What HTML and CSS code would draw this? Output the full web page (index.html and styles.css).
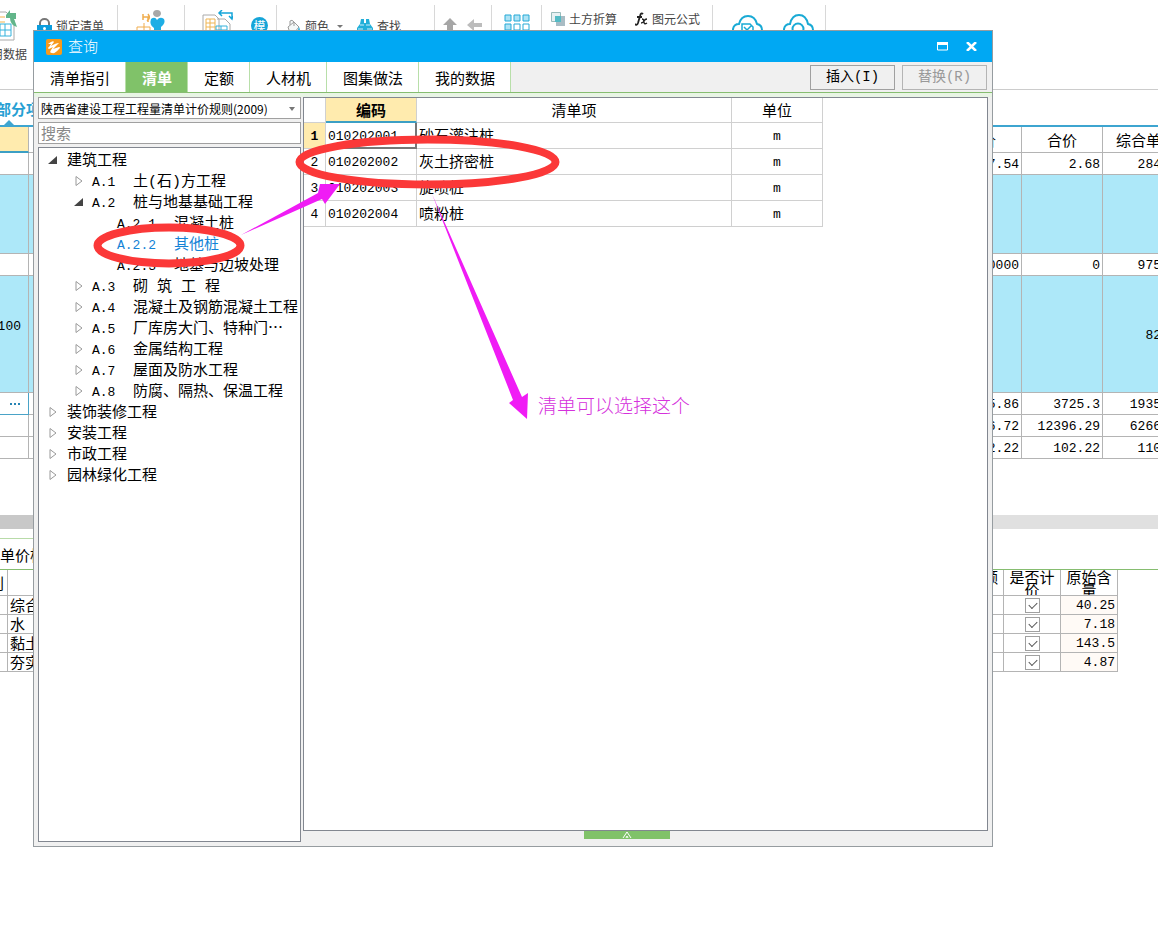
FILE: index.html
```
<!DOCTYPE html>
<html lang="zh-CN">
<head>
<meta charset="utf-8">
<title>查询</title>
<link rel="stylesheet" href="styles.css">
</head>
<body>
<main class="app">
  <header class="ribbon">
    <div class="group group-data">
      <button class="big-tool">
        <svg width="28" height="32" viewBox="0 0 28 32" fill="none"><path d="M8 3h7l8 8v20H8z" fill="#fff" stroke="#aaa"/><path d="M4 8h10M4 13h10M8 2v18" stroke="#f3b34c"/><path d="M9 15h11v12H9zM9 21h11M14 15v12" stroke="#35b2dc"/><path d="M15 6l4-5v3h6v6h-2q2 5 3 8-7-2-7-9h-4z" fill="#62b58a"/></svg>
        <span>用数据</span>
      </button>
      <button class="tool">
        <svg width="15" height="16" viewBox="0 0 15 16"><path d="M3 8V5a4.500 4 0 0 1 9 0v3" fill="none" stroke="#777" stroke-width="2"/><path d="M0 7h15v9H0z" fill="#0b9ddd"/><circle cx="7.500" cy="10.500" r="1.500" fill="#fff"/></svg>
        <span>锁定清单</span>
      </button>
    </div>
    <div class="group group-center">
      <button class="tool" aria-label="整理清单"><svg width="30" height="26" viewBox="0 0 30 26"><path d="M7 4v6M7 7h5v5M12 4q3 4-1 7" fill="none" stroke="#f0ad4e" stroke-width="1.500"/><path d="M1 17h13v6M1 17v9M8 13v13M1 21h13" fill="none" stroke="#f0ad4e"/><path d="M17 4q0-4 4-4t4 4q-1 3-4 3t-4-3" fill="#a8a8a8"/><path d="M15 9q4-3 6 1 3-4 7-1 2 4-3 8v9h-7v-8q-5-3-3-9" fill="#1eaee5"/></svg></button>
    </div>
    <div class="group group-code">
      <button class="tool" aria-label="编码"><svg width="31" height="26" viewBox="0 0 31 26" fill="none"><path d="M1 5h12l4 4v17M1 5v21" stroke="#aaa"/><path d="M4 9h9v12H4zM4 13h9M4 17h9M8 9v12" stroke="#efb552"/><path d="M15 9h8l5 5v12" stroke="#aaa"/><path d="M14 16h11v10M14 16v10M14 20h11M19 16v10" stroke="#35b2dc"/><path d="M17 3h13v6M20 0l-3 3 3 3M27 6l3 3 1-3" stroke="#15a5d9" stroke-width="1.500"/></svg></button>
      <button class="tool badge">模</button>
    </div>
    <div class="group group-edit">
      <button class="tool">
        <svg width="14" height="15" viewBox="0 0 14 15"><path d="M1 8l6-5 5 5-5 6H3zM3 6V2q2-2 4 1v4" fill="#f4f8f8" stroke="#999"/><path d="M12 8q2 4 0 5-2-1 0-5" fill="#35b2dc"/></svg>
        <span>颜色</span>
        <svg class="caret" width="6" height="3" viewBox="0 0 6 3"><path d="M0 0h6L3 3z" fill="#777"/></svg>
      </button>
      <button class="tool">
        <svg width="16" height="16" viewBox="0 0 16 16"><path d="M4 1h3v4h2V1h3l1 5 3 4v6h-7v-4H7v4H0v-6l3-4z" fill="#22afd9"/><path d="M3 7h4M9 7h4M1 11h5M10 11h5" stroke="#c9eefa"/></svg>
        <span>查找</span>
      </button>
    </div>
    <div class="group group-move">
      <button class="tool" aria-label="上移"><svg width="14" height="14" viewBox="0 0 14 14"><path d="M7 0l7 7H10v7H4V7H0z" fill="#a6a6a6"/></svg></button>
      <button class="tool" aria-label="左移"><svg width="16" height="14" viewBox="0 0 16 14"><path d="M0 7l7-6v4h8v4H7v4z" fill="#bcbcbc"/></svg></button>
    </div>
    <div class="group group-grid">
      <button class="tool" aria-label="其他"><svg width="26" height="17" viewBox="0 0 26 17" fill="#aee3f5" stroke="#25a9d6"><path d="M1 1h6v6H1zM10 1h6v6h-6zM19 1h6v6h-6zM1 10h6v6H1z"/><path fill="#fff" d="M10 10h6v6h-6zM19 10h6v6h-6z"/></svg></button>
    </div>
    <div class="group group-calc">
      <button class="tool">
        <svg width="14" height="14" viewBox="0 0 14 14"><path d="M.5.500h9v9h-9z" fill="#e7f1f3" stroke="#9bb"/><path d="M5 4h9v10H5z" fill="#a9bcc4"/><path d="M4 4h6v6H4z" fill="#53bbc5"/></svg>
        <span>土方折算</span>
      </button>
      <button class="tool">
        <svg width="13" height="14" viewBox="0 0 13 14" fill="none" stroke="#222"><path d="M8 2q-2-2-3 2L3 11q-1 3-3 1M2 5h5" stroke-width="1.800"/><path d="M7 7q2 0 2 3t3 1M12 7q-2 0-3 2t-3 2" stroke-width="1.400"/></svg>
        <span>图元公式</span>
      </button>
    </div>
    <div class="group group-cloud">
      <button class="tool" aria-label="云检查"><svg width="32" height="25" viewBox="0 0 32 25" fill="none" stroke="#19aad5" stroke-width="2"><path d="M7 22q-6-1-5-6t6-5q2-8 9-8t9 8q5 1 5 6t-6 5"/><path d="M11 11h8l3 3v9H11zM13 14l3 3 4-4" stroke-width="1.500"/></svg></button>
      <button class="tool" aria-label="云查询"><svg width="32" height="25" viewBox="0 0 32 25" fill="none" stroke="#19aad5" stroke-width="2"><path d="M7 22q-6-1-5-6t6-5q2-9 9-9t9 9q5 1 5 6t-6 5"/><circle cx="16" cy="16" r="5.500"/></svg></button>
    </div>
  </header>

  <nav class="page-tabs"><a class="page-tab" href="#items">部分项</a></nav>

  <section class="sheet" id="items">
    <table class="cost">
      <colgroup><col class="c-mark"><col><col class="c-num"><col class="c-num"><col class="c-edge"></colgroup>
      <tr class="head"><th class="picked"></th><th></th><th>单价</th><th>合价</th><th class="num">综合单</th></tr>
      <tr class="line"><td></td><td></td><td>7.54</td><td>2.68</td><td>284</td></tr>
      <tr class="blue short"><td></td><td></td><td></td><td></td><td></td></tr>
      <tr class="line"><td></td><td></td><td>0000</td><td>0</td><td>975</td></tr>
      <tr class="blue tall"><td class="qty">100</td><td></td><td></td><td></td><td>82</td></tr>
      <tr class="line"><td class="more"><button aria-label="更多"><svg width="11" height="2" viewBox="0 0 11 2" fill="#2784b4"><path d="M0 0h2v2H0zM4 0h2v2H4zM8 0h2v2H8z"/></svg></button></td><td></td><td>5.86</td><td>3725.3</td><td>1935</td></tr>
      <tr class="line"><td></td><td></td><td>6.72</td><td>12396.29</td><td>6266</td></tr>
      <tr class="line"><td></td><td></td><td>2.22</td><td>102.22</td><td>110</td></tr>
    </table>
  </section>

  <div class="scrollbar"><div class="thumb"></div></div>

  <section class="detail">
    <div class="detail-tabs"><a href="#detail">单价构</a></div>
    <table class="parts" id="detail">
      <colgroup><col class="p-kind"><col><col class="p-name"><col class="p-check"><col class="p-value"></colgroup>
      <tr class="head"><th class="clip">别</th><th></th><th class="amount">额</th><th class="two"><div>是否计价</div></th><th class="two"><div>原始含量</div></th></tr>
      <tr><td></td><td>综合</td><td></td><td class="tick"><input type="checkbox" checked aria-label="综合 是否计价"></td><td class="value">40.25</td></tr>
      <tr><td></td><td>水</td><td></td><td class="tick"><input type="checkbox" checked aria-label="水 是否计价"></td><td class="value">7.18</td></tr>
      <tr><td></td><td>黏土</td><td></td><td class="tick"><input type="checkbox" checked aria-label="黏土 是否计价"></td><td class="value">143.5</td></tr>
      <tr><td></td><td>夯实</td><td></td><td class="tick"><input type="checkbox" checked aria-label="夯实 是否计价"></td><td class="value">4.87</td></tr>
    </table>
  </section>
</main>

<section class="dialog" role="dialog" aria-labelledby="dialog-title">
  <header class="titlebar">
    <svg width="16" height="16" viewBox="0 0 16 16"><rect width="16" height="16" rx="2" fill="#f79a1c"/><path d="M2 5q5-4 6-2L5 7q5-3 8-3L7 10l6-2q2 0 0 2-4 5-7 4-3 0-1-3l2-3-4 2q-2-1 0-2l2-3z" fill="#fff"/></svg>
    <h1 id="dialog-title">查询</h1>
    <button class="window-button" aria-label="最大化"><svg width="11" height="9" viewBox="0 0 11 9"><path d="M.5 1h10v7H.5z" fill="none" stroke="#fff"/><path d="M0 0h11v3H0z" fill="#fff"/></svg></button>
    <button class="window-button" aria-label="关闭"><svg width="11" height="9" viewBox="0 0 11 9"><path d="M1 0l9 9M10 0L1 9" stroke="#fff" stroke-width="2.500"/></svg></button>
  </header>
  <div class="tabbar">
    <nav class="tabs">
      <button>清单指引</button><button class="active">清单</button><button>定额</button><button>人材机</button><button>图集做法</button><button>我的数据</button>
    </nav>
    <button class="action">插入(I)</button>
    <button class="action" disabled>替换(R)</button>
  </div>
  <div class="body">
    <aside class="side">
      <div class="picker">
        <select aria-label="清单规则"><option>陕西省建设工程工程量清单计价规则(2009)</option></select>
        <svg class="picker-arrow" width="6" height="4" viewBox="0 0 6 4"><path d="M0 0h6L3 4z" fill="#777"/></svg>
      </div>
      <input class="search" type="text" placeholder="搜索" aria-label="搜索">
      <ul class="tree">
        <li class="l0"><svg class="tw" viewBox="0 0 9 10"><path d="M9 1v8H0z" fill="#444"/></svg><span>建筑工程</span></li>
        <li class="l1"><svg class="tw" viewBox="0 0 9 10"><path d="M2 .5v9L8 5z" fill="#fff" stroke="#999"/></svg><span class="code">A.1</span><span class="spaced">土(石)方工程</span></li>
        <li class="l1"><svg class="tw" viewBox="0 0 9 10"><path d="M9 1v8H0z" fill="#444"/></svg><span class="code">A.2</span><span>桩与地基基础工程</span></li>
        <li class="l2"><span class="code">A.2.1</span><span>混凝土桩</span></li>
        <li class="l2 current"><span class="code">A.2.2</span><span>其他桩</span></li>
        <li class="l2"><span class="code">A.2.3</span><span>地基与边坡处理</span></li>
        <li class="l1"><svg class="tw" viewBox="0 0 9 10"><path d="M2 .5v9L8 5z" fill="#fff" stroke="#999"/></svg><span class="code">A.3</span><span class="spaced">砌 筑 工 程</span></li>
        <li class="l1"><svg class="tw" viewBox="0 0 9 10"><path d="M2 .5v9L8 5z" fill="#fff" stroke="#999"/></svg><span class="code">A.4</span><span>混凝土及钢筋混凝土工程</span></li>
        <li class="l1"><svg class="tw" viewBox="0 0 9 10"><path d="M2 .5v9L8 5z" fill="#fff" stroke="#999"/></svg><span class="code">A.5</span><span>厂库房大门、特种门…</span></li>
        <li class="l1"><svg class="tw" viewBox="0 0 9 10"><path d="M2 .5v9L8 5z" fill="#fff" stroke="#999"/></svg><span class="code">A.6</span><span>金属结构工程</span></li>
        <li class="l1"><svg class="tw" viewBox="0 0 9 10"><path d="M2 .5v9L8 5z" fill="#fff" stroke="#999"/></svg><span class="code">A.7</span><span>屋面及防水工程</span></li>
        <li class="l1"><svg class="tw" viewBox="0 0 9 10"><path d="M2 .5v9L8 5z" fill="#fff" stroke="#999"/></svg><span class="code">A.8</span><span>防腐、隔热、保温工程</span></li>
        <li class="l0"><svg class="tw" viewBox="0 0 9 10"><path d="M2 .5v9L8 5z" fill="#fff" stroke="#999"/></svg><span>装饰装修工程</span></li>
        <li class="l0"><svg class="tw" viewBox="0 0 9 10"><path d="M2 .5v9L8 5z" fill="#fff" stroke="#999"/></svg><span>安装工程</span></li>
        <li class="l0"><svg class="tw" viewBox="0 0 9 10"><path d="M2 .5v9L8 5z" fill="#fff" stroke="#999"/></svg><span>市政工程</span></li>
        <li class="l0"><svg class="tw" viewBox="0 0 9 10"><path d="M2 .5v9L8 5z" fill="#fff" stroke="#999"/></svg><span>园林绿化工程</span></li>
      </ul>
    </aside>
    <div class="result">
      <div class="result-panel">
        <table class="items">
          <colgroup><col class="i-no"><col class="i-code"><col class="i-name"><col class="i-unit"></colgroup>
          <tr><th></th><th class="picked">编码</th><th>清单项</th><th>单位</th></tr>
          <tr><td class="no picked">1</td><td class="mono cell-active">010202001</td><td>砂石灌注桩</td><td class="unit">m</td></tr>
          <tr><td class="no">2</td><td class="mono">010202002</td><td>灰土挤密桩</td><td class="unit">m</td></tr>
          <tr><td class="no">3</td><td class="mono">010202003</td><td>旋喷桩</td><td class="unit">m</td></tr>
          <tr><td class="no">4</td><td class="mono">010202004</td><td>喷粉桩</td><td class="unit">m</td></tr>
        </table>
      </div>
      <button class="handle" aria-label="展开"><svg width="10" height="8" viewBox="0 0 10 8"><path d="M1 7l4-6 4 6M4 7l1-2 1 2" fill="none" stroke="#fff"/></svg></button>
    </div>
  </div>
</section>

<svg class="marks" width="700" height="440" viewBox="0 0 700 440">
  <g fill="none" stroke="#fb3838" stroke-width="8"><ellipse cx="427.500" cy="162" rx="128" ry="22.500"/><ellipse cx="169" cy="245.500" rx="71.500" ry="18"/></g>
  <g fill="#f01cf5"><path d="M241 235L318 193 320 184H340L325 204 322 199z"/><path d="M432 194L522 397 528 393 527 419 509 403 513 400z"/></g>
</svg>
<p class="note">清单可以选择这个</p>
</body>
</html>
```
FILE: styles.css
```
* { box-sizing: border-box; }
body {
  margin: 0;
  min-height: 100vh;
  position: relative;
  overflow: hidden;
  background: #fff;
  color: #000;
  font: 15px/20px "Noto Sans CJK SC", sans-serif;
}
button, input, select { font: inherit; color: inherit; margin: 0; padding: 0; border: 0; background: none; border-radius: 0; }
a { color: inherit; text-decoration: none; }
table { border-collapse: separate; border-spacing: 0; table-layout: fixed; }
th { font-weight: 400; }
th, td { padding: 0; white-space: nowrap; overflow: hidden; }
svg { display: block; flex: none; }

/* ribbon */
.ribbon { display: flex; height: 90px; padding-top: 5px; border-bottom: 1px solid #ccc; font-size: 12px; line-height: 16px; color: #444; }
.group { display: flex; align-items: flex-start; height: 76px; border-right: 1px solid #d8d8d8; overflow: hidden; }
.tool { display: flex; align-items: center; gap: 4px; flex: none; }
.group-data { width: 118px; padding-right: 13px; justify-content: flex-end; gap: 10px; }
.group-data .tool { padding-top: 13px; }
.big-tool { display: flex; flex-direction: column; align-items: flex-end; gap: 5px; padding-top: 4px; flex: none; }
.big-tool svg { margin-right: 8px; }
.group-center { width: 67px; justify-content: center; padding-top: 5px; }
.group-code { width: 92px; padding: 5px 8px 0 17px; justify-content: space-between; }
.badge { justify-content: center; width: 17px; height: 17px; margin-top: 7px; border-radius: 50%; background: #16a5d8; color: #fff; font-size: 12px; }
.group-edit { width: 158px; padding: 13px 0 0 10px; gap: 14px; }
.caret { margin-left: 4px; }
.group-move { width: 57px; padding: 13px 8px 0; justify-content: space-between; }
.group-grid { width: 50px; padding-top: 9px; justify-content: center; }
.group-calc { width: 171px; padding: 6px 12px 0 9px; justify-content: space-between; }
.group-cloud { width: 113px; padding: 8px 11px 0 18px; justify-content: space-between; }

/* page tabs */
.page-tabs { height: 37px; border-bottom: 2px solid #3ea5d0; }
.page-tab { position: relative; display: flex; justify-content: flex-end; width: 41px; height: 35px; align-items: center; padding-top: 3px; white-space: nowrap; font-weight: 700; color: #279fd3; }
.page-tab::after { content: ""; position: absolute; left: 4px; bottom: 0; border: 5px solid transparent; border-top: 0; border-bottom-color: #3ea5d0; }

/* cost sheet */
.sheet { height: 388px; overflow: hidden; }
.cost { width: calc(100% + 6px); }
.c-mark { width: 29px; }
.c-num { width: 81px; }
.c-edge { width: 61px; }
.cost th, .cost td { border-right: 1px solid #b4b4b4; border-bottom: 1px solid #b4b4b4; }
.cost .head { height: 26px; }
.cost .line { height: 22px; }
.cost .short { height: 79px; }
.cost .tall { height: 117px; }
.cost td { padding: 3px 2px 0; text-align: right; font: 13px/16px "Liberation Mono", monospace; }
.cost .num { text-align: right; padding-right: 2px; }
.cost .blue td { background: #ade8f9; }
.cost .picked { border-bottom: 2px solid #3c9fc4; }
.cost .blue .qty { padding: 0 8px 14px 0; direction: rtl; }
.cost .more { padding: 0 6px 0 0; border-color: #4aa3c7; }
.more button { display: block; margin-left: auto; width: 12px; }
.picked { background: #ffebae; }

.scrollbar { height: 14px; background: #e0e0e0; }
.thumb { width: 40%; height: 14px; background: #c8c8c8; }

/* parts */
.detail { padding-top: 9px; }
.detail-tabs { height: 32px; border-bottom: 1px solid #86bd70; }
.detail-tabs a { display: block; width: 25%; padding-top: 6px; border-top: 1px solid #b8dba8; }
.parts { width: calc(100% - 40px); }
.p-kind { width: 8px; }
.p-name { width: 70px; }
.p-check, .p-value { width: 57px; }
.parts th, .parts td { border-right: 1px solid #b4b4b4; border-bottom: 1px solid #b4b4b4; }
.parts tr { height: 19px; }
.parts .head { height: 26px; }
.parts td { padding-left: 2px; line-height: 18px; }
.parts .clip { direction: rtl; padding-right: 4px; line-height: 24px; }
.parts .amount { text-align: right; padding: 0 5px 0 0; line-height: 14px; vertical-align: top; }
.parts .two { padding: 0 5px; white-space: normal; line-height: 13px; vertical-align: top; }
.two div { display: flex; align-items: center; height: 25px; }
.parts .value { padding: 2px 2px 0 0; text-align: right; background: #fffaf6; font: 13px/16px "Liberation Mono", monospace; }
.parts .tick { padding: 0; text-align: center; line-height: 0; }
.tick input { appearance: none; position: relative; display: inline-block; width: 15px; height: 15px; border: 1px solid #a0a0a0; background: #fff; }
.tick input::after { content: ""; position: absolute; left: 3px; top: 3px; width: 7px; height: 4px; border: solid #555; border-width: 0 0 1px 1px; transform: rotate(-45deg); }

/* dialog */
.dialog { position: absolute; inset: 30px 165px 85px 33px; display: flex; flex-direction: column; border: 1px solid #969ca0; background: #f0f0f0; }
.titlebar { display: flex; align-items: center; height: 31px; padding: 0 15px 0 12px; background: #00a8f3; color: #fff; }
.titlebar h1 { margin: 0 auto 0 6px; padding-bottom: 2px; font-size: 15px; font-weight: 300; }
.window-button { margin-left: 18px; }
.tabbar { display: flex; align-items: center; gap: 7px; height: 31px; padding-right: 5px; border-bottom: 1px solid #86bd70; }
.tabs { display: flex; align-self: stretch; margin-right: auto; }
.tabs button { padding: 2px 15px 0 16px; border-right: 1px solid #b8dfa9; background: #fff; }
.tabs .active { background: #80c269; color: #fff; font-weight: 700; }
.action { width: 85px; height: 25px; border: 1px solid #a0a0a0; font: 14px/20px "Liberation Mono", "Noto Sans CJK SC", monospace; }
.action:disabled { color: #999; border-color: #b4b4b4; }
.body { flex: 1; min-height: 0; display: flex; gap: 2px; padding: 4px; background: linear-gradient(#e8f5e4 4px, #f0f0f0 4px); }
.side { width: 263px; flex: none; display: flex; flex-direction: column; gap: 3px; }
.picker { position: relative; height: 22px; border: 1px solid #a0a0a0; background: #fff; }
.picker select { appearance: none; width: 100%; height: 20px; padding-left: 2px; font-size: 12px; line-height: 20px; }
.picker-arrow { position: absolute; right: 5px; top: 9px; }
.search { height: 22px; padding: 0 2px 2px; border: 1px solid #a0a0a0; background: #fff; }
.search::placeholder { color: #888; opacity: 1; }
.tree { flex: 1; margin: 0; padding: 1px 0 0; list-style: none; border: 1px solid #828790; background: #fff; overflow: hidden; white-space: nowrap; }
.tree li { display: flex; height: 21px; align-items: baseline; }
.tree li::before { content: "\200b"; }
.tw { width: 9px; height: 10px; margin-bottom: 3px; }
.l0 { padding-left: 9px; }
.l0 .tw { margin-right: 10px; }
.l1 { padding-left: 35px; }
.l1 .tw { margin-right: 9px; }
.l2 { padding-left: 78px; }
.code { width: 41px; font: 13px/16px "Liberation Mono", monospace; }
.l2 .code { width: 57px; }
.spaced { font-family: "Liberation Mono", "Noto Sans CJK SC", monospace; }
.current { color: #1483d6; }

.result { flex: 1; min-width: 0; display: flex; flex-direction: column; padding-bottom: 3px; }
.result-panel { flex: 1; border: 1px solid #828790; background: #fff; }
.items { width: 519px; max-width: 100%; }
.i-no { width: 22px; }
.i-code, .i-unit { width: 91px; }
.items tr { height: 26px; }
.items tr:first-child { height: 25px; }
.items th, .items td { border-right: 1px solid #d0d0d0; border-bottom: 1px solid #d0d0d0; }
.items td { padding: 0 0 1px 2px; }
.items th.picked { font-weight: 700; border-bottom: 2px solid #3c9fc4; }
.items .no, .items .mono, .items .unit { padding-top: 4px; font: 13px/16px "Liberation Mono", monospace; }
.items .no, .items .unit { padding-left: 0; text-align: center; }
.items .no.picked { font-weight: 700; }
.items .cell-active { border-right: 2px solid #777; border-bottom: 2px solid #777; }
.handle { display: flex; justify-content: center; width: 86px; height: 8px; margin-left: 41%; background: #80c269; }

/* annotations */
.marks { position: absolute; left: 0; top: 0; pointer-events: none; }
.note { position: absolute; left: 538px; top: 393px; margin: 0; font-size: 19px; line-height: 24px; color: #d531dc; font-weight: 300; }
```
